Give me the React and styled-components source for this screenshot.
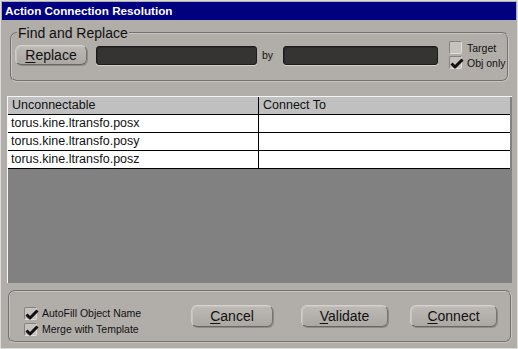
import React, { Fragment } from "react";
import styled, { createGlobalStyle } from "styled-components";

const GlobalStyle = createGlobalStyle`
  body {
    margin: 0;
    padding: 0;
    background: #b1ada9;
    font-family: "Liberation Sans", Arial, sans-serif;
  }
`;

const Window = styled.div`
  width: 518px;
  height: 349px;
  box-sizing: border-box;
  border: 1px solid #dcdcdc;
  padding: 1px;
  background: #b1ada9;
  display: flex;
  flex-direction: column;
`;

const TitleBar = styled.div`
  height: 18px;
  line-height: 18px;
  background: #000080;
  color: #fff;
  font-weight: bold;
  font-size: 11.7px;
  padding-left: 3px;
  flex-shrink: 0;
`;

const Body = styled.div`
  flex: 1;
  display: flex;
  flex-direction: column;
  padding: 6px 4px 4px 5px;
  min-height: 0;
`;

const Group = styled.fieldset`
  margin: ${p => p.$margin};
  padding: ${p => p.$pad};
  border: 2px groove #c8c4c0;
  border-radius: 7px;
  min-width: 0;
  flex-shrink: 0;
  height: ${p => p.$h}px;
  box-sizing: border-box;
`;

const Legend = styled.legend`
  font-size: 14px;
  line-height: 14px;
  color: #101010;
  padding: 0 1px;
  margin-left: 2px;
`;

const Row = styled.div`
  display: flex;
  align-items: center;
  height: 30px;
`;

const Button = styled.button`
  width: ${p => p.$w}px;
  height: ${p => p.$h}px;
  margin-left: ${p => p.$ml || 0}px;
  padding: 0;
  font-family: "Liberation Sans", Arial, sans-serif;
  font-size: 14px;
  color: #111;
  background: linear-gradient(#bdb9b5, #aba7a3);
  border: 1px solid;
  border-color: #d6d2ce #76726e #6a6662 #d0ccc8;
  border-radius: 6px;
  box-shadow: 1px 1px 0 #8e8a86, inset 1px 1px 0 #c6c2be;
  flex-shrink: 0;

  u {
    text-decoration: underline;
    text-underline-offset: 2px;
  }
`;

const Field = styled.div`
  width: ${p => p.$w}px;
  height: 19px;
  margin-left: ${p => p.$ml}px;
  flex-shrink: 0;
  box-sizing: border-box;
  background: #363432;
  border: 1px solid #1c1c1c;
  border-radius: 3px;
  box-shadow: 0 1px 0 #d4d0cc, inset 1px 1px 0 #2a2826;
`;

const By = styled.span`
  font-size: 10.5px;
  color: #111;
  margin-left: 5px;
  width: 17px;
  flex-shrink: 0;
`;

const CheckCol = styled.div`
  display: flex;
  flex-direction: column;
  flex-shrink: 0;
  margin-left: ${p => p.$ml}px;
`;

const CheckRow = styled.label`
  display: flex;
  align-items: center;
  height: ${p => p.$h}px;
  font-size: 10.5px;
  color: #111;
  gap: 5px;
  white-space: nowrap;
`;

const Box = styled.span`
  width: 13px;
  height: 13px;
  box-sizing: border-box;
  border: 1px solid;
  border-color: #86827e #e2deda #e2deda #86827e;
  border-radius: 2px;
  background: #c6c2be;
  position: relative;
  flex-shrink: 0;
`;

const Tick = () => (
  <svg width="14" height="12" viewBox="0 0 14 12" style={{ position: "absolute", left: 0, top: 0 }}>
    <path d="M1.5 6.5 L5 10 L12.5 2.5" stroke="#111" strokeWidth="3" fill="none" strokeLinejoin="round" />
  </svg>
);

const Check = ({ on, label, h }) => (
  <CheckRow $h={h}>
    <Box>{on && <Tick />}</Box>
    {label}
  </CheckRow>
);

const Panel = styled.div`
  flex: 1;
  margin-top: 14px;
  background: #818181;
  border-top: 1px solid #f4f4f4;
  border-left: 1px solid #f4f4f4;
  min-height: 0;
`;

const Table = styled.div`
  width: 502px;
  display: grid;
  grid-template-columns: 251px 251px;
  border-right: 1px solid #000;
  box-sizing: border-box;
`;

const Cell = styled.div`
  height: 18px;
  box-sizing: border-box;
  border-bottom: 1px solid #000;
  border-right: ${p => (p.$first ? "1px solid #000" : "none")};
  background: ${p => (p.$head ? "#c0c0c0" : "#fff")};
  font-size: 12.5px;
  line-height: 17px;
  color: #111;
  padding-left: ${p => (p.$head ? 4 : 3)}px;
  white-space: nowrap;
`;

const Bottom = styled.div`
  display: flex;
  align-items: flex-start;
  padding-top: 13px;
`;

const Buttons = styled.div`
  display: flex;
  margin-left: auto;
  margin-right: 13px;
`;

const rows = ["torus.kine.ltransfo.posx", "torus.kine.ltransfo.posy", "torus.kine.ltransfo.posz"];

export default () => (
  <Fragment>
    <GlobalStyle />
    <Window>
      <TitleBar>Action Connection Resolution</TitleBar>
      <Body>
        <Group $margin="0 3px" $pad="0 0 0 3px" $h={56}>
          <Legend>Find and Replace</Legend>
          <Row>
            <Button $w={72} $h={20}>
              <u>R</u>eplace
            </Button>
            <Field $w={161} $ml={9} />
            <By>by</By>
            <Field $w={155} $ml={4} />
            <CheckCol $ml={11}>
              <Check label="Target" h={15} />
              <Check on label="Obj only" h={15} />
            </CheckCol>
          </Row>
        </Group>
        <Panel>
          <Table>
            <Cell $head $first>Unconnectable</Cell>
            <Cell $head>Connect To</Cell>
            {rows.map(r => (
              <Fragment key={r}>
                <Cell $first>{r}</Cell>
                <Cell />
              </Fragment>
            ))}
          </Table>
        </Panel>
        <Group $margin="7px 0 0 1px" $pad="0 0 0 14px" $h={53}>
          <Bottom>
            <CheckCol $ml={0}>
              <Check on label="AutoFill Object Name" h={16} />
              <Check on label="Merge with Template" h={16} />
            </CheckCol>
            <Buttons>
              <Button $w={82} $h={22}>
                <u>C</u>ancel
              </Button>
              <Button $w={87} $h={22} $ml={28}>
                <u>V</u>alidate
              </Button>
              <Button $w={87} $h={22} $ml={22}>
                <u>C</u>onnect
              </Button>
            </Buttons>
          </Bottom>
        </Group>
      </Body>
    </Window>
  </Fragment>
);
